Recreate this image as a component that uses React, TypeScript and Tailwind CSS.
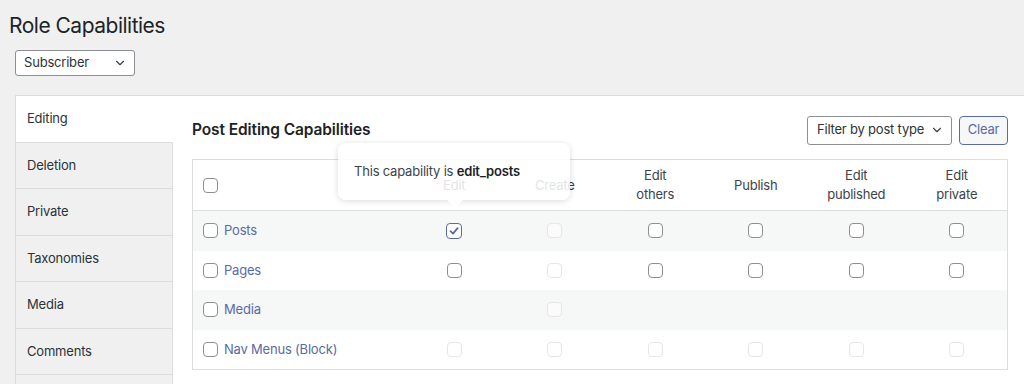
import React from 'react';
import { ChevronDown } from 'lucide-react';

const tabs = ['Editing', 'Deletion', 'Private', 'Taxonomies', 'Media', 'Comments', ''];

type Cell = 'on' | 'off' | 'disabled' | 'empty';

type Row = {
  name: string;
  cells: Cell[];
  striped: boolean;
};

const rows: Row[] = [
  { name: 'Posts', cells: ['on', 'disabled', 'off', 'off', 'off', 'off'], striped: true },
  { name: 'Pages', cells: ['off', 'disabled', 'off', 'off', 'off', 'off'], striped: false },
  { name: 'Media', cells: ['empty', 'disabled', 'empty', 'empty', 'empty', 'empty'], striped: true },
  { name: 'Nav Menus (Block)', cells: ['disabled', 'disabled', 'disabled', 'disabled', 'disabled', 'disabled'], striped: false },
];

const Checkbox: React.FC<{ state: Cell }> = ({ state }) => {
  if (state === 'empty') return null;
  if (state === 'disabled') {
    return <span className="block w-[15px] h-[15px] rounded-[4px] border border-[#e6e6e8] bg-white/50" />;
  }
  if (state === 'on') {
    return (
      <span className="flex items-center justify-center w-[16px] h-[16px] rounded-[4px] border-[1.5px] border-[#5b6aa6] bg-white">
        <svg width="12" height="12" viewBox="0 0 12 12" fill="none">
          <path d="M2.5 6.2 L5 8.6 L9.6 3.2" stroke="#5b6aa6" strokeWidth="1.8" strokeLinecap="round" strokeLinejoin="round" />
        </svg>
      </span>
    );
  }
  return <span className="block w-[15px] h-[15px] rounded-[4px] border border-[#8c8f94] bg-white" />;
};

const headers: string[][] = [['Edit'], ['Create'], ['Edit', 'others'], ['Publish'], ['Edit', 'published'], ['Edit', 'private']];

export default function App() {
  return (
    <div
      className="w-[1024px] h-[384px] overflow-hidden bg-[#f0f0f1] text-[#2c3338] tracking-[-0.2px]"
      style={{ fontFamily: 'Inter, "Noto Sans", sans-serif' }}
    >
      <h1 className="pl-[9px] pt-[11px] text-[21px] leading-[30px] font-normal tracking-[-0.5px] text-[#1d2327]">Role Capabilities</h1>

      <div className="ml-[15px] mt-[9px] w-[120px] h-[26px] flex items-center justify-between pl-[8px] pr-[7px] bg-white border border-[#8c8f94] rounded-[3px] text-[13px]">
        <span>Subscriber</span>
        <ChevronDown size={14} strokeWidth={2} className="text-[#3c434a]" />
      </div>

      <div className="ml-[15px] mt-[19px] flex bg-white border-l border-t border-[#dcdcde] h-[300px]">
        <div className="w-[157px] shrink-0 flex flex-col">
          {tabs.map((t, i) => (
            <div
              key={i}
              className={`h-[46.5px] shrink-0 flex items-center pl-[11px] text-[13px] border-b border-[#dcdcde] ${
                i === 0 ? 'bg-white' : 'bg-[#f0f0f1] border-r'
              }`}
            >
              {t}
            </div>
          ))}
        </div>

        <div className="relative flex-1 pl-[19px] pr-[16px] pt-[19px]">
          <div className="flex items-center justify-between h-[30px]">
            <h2 className="text-[15.5px] font-semibold text-[#1d2327] tracking-[-0.1px]">Post Editing Capabilities</h2>
            <div className="flex items-center gap-[7px]">
              <div className="w-[145px] h-[29px] flex items-center justify-between pl-[9px] pr-[7px] bg-white border border-[#8c8f94] rounded-[3px] text-[13px] whitespace-nowrap">
                <span>Filter by post type</span>
                <ChevronDown size={14} strokeWidth={2} className="text-[#3c434a]" />
              </div>
              <div className="w-[49px] h-[29px] flex items-center justify-center bg-[#f6f7f7] border border-[#5b6aa6] rounded-[4px] text-[13px] text-[#5b6aa6]">
                Clear
              </div>
            </div>
          </div>

          <div className="mt-[14px] border border-[#dcdcde] bg-white text-[13px]">
            <div className="grid grid-cols-[211px_repeat(6,1fr)] h-[51px] border-b border-[#dcdcde] items-center">
              <div className="pl-[10px]">
                <Checkbox state="off" />
              </div>
              {headers.map((h, i) => (
                <div key={i} className="text-center leading-[19px] text-[#3c434a]">
                  {h.map((l) => (
                    <div key={l}>{l}</div>
                  ))}
                </div>
              ))}
            </div>
            {rows.map((r) => (
              <div
                key={r.name}
                className={`grid grid-cols-[211px_repeat(6,1fr)] h-[39.5px] items-center ${r.striped ? 'bg-[#f6f7f7]' : 'bg-white'}`}
              >
                <div className="pl-[10px] flex items-center gap-[6px]">
                  <Checkbox state="off" />
                  <span className="text-[#5b6aa6]">{r.name}</span>
                </div>
                {r.cells.map((c, i) => (
                  <div key={i} className="flex justify-center">
                    <Checkbox state={c} />
                  </div>
                ))}
              </div>
            ))}
          </div>

          {/* tooltip over the Edit column */}
          <div className="absolute left-[165px] top-[47px] w-[232px] h-[57px] rounded-[8px] bg-white/85 shadow-[0_1px_6px_rgba(0,0,0,0.15)] flex items-center pl-[16px] text-[13px] text-[#3c434a]">
            <span>
              This capability is <span className="font-semibold text-[#1d2327]">edit_posts</span>
            </span>
            <div className="absolute left-[109px] -bottom-[8px] w-0 h-0 border-l-[8px] border-r-[8px] border-t-[8px] border-l-transparent border-r-transparent border-t-white/90" />
          </div>
        </div>
      </div>
    </div>
  );
}
